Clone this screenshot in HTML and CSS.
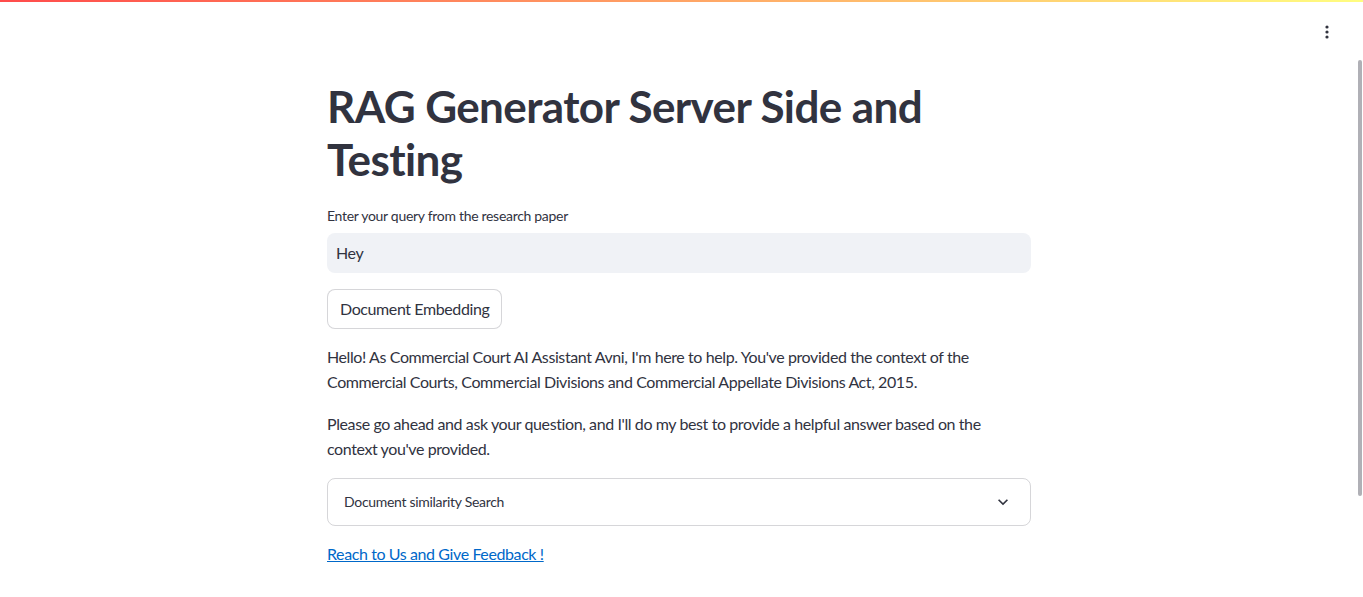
FILE: index.html
```html
<!DOCTYPE html>
<html lang="en">
<head>
<meta charset="utf-8">
<title>RAG Generator</title>
<link rel="stylesheet" href="styles.css">
</head>
<body>
<div class="app">
  <div class="decoration"></div>
  <header class="toolbar">
    <button class="menu-btn" aria-label="Main menu">
      <svg width="16" height="16" viewBox="0 0 16 16"><circle cx="8" cy="3" r="1.6" fill="#31333F"/><circle cx="8" cy="8" r="1.6" fill="#31333F"/><circle cx="8" cy="13" r="1.6" fill="#31333F"/></svg>
    </button>
  </header>
  <main class="main">
    <div class="block">
      <h1 class="title">RAG Generator Server Side and Testing</h1>
      <label class="label" for="q">Enter your query from the research paper</label>
      <div class="input-wrap"><input id="q" class="input" type="text" value="Hey"></div>
      <button class="btn">Document Embedding</button>
      <div class="md">
        <p>Hello! As Commercial Court AI Assistant Avni, I'm here to help. You've provided the context of the Commercial Courts, Commercial Divisions and Commercial Appellate Divisions Act, 2015.</p>
        <p>Please go ahead and ask your question, and I'll do my best to provide a helpful answer based on the context you've provided.</p>
      </div>
      <details class="expander">
        <summary class="summary"><span>Document similarity Search</span>
          <svg class="chev" width="20" height="20" viewBox="0 0 24 24"><path d="M7.41 8.59 12 13.17l4.59-4.58L18 10l-6 6-6-6 1.41-1.41z" fill="#31333F"/></svg>
        </summary>
      </details>
      <p class="link-p"><a class="link" href="#">Reach to Us and Give Feedback !</a></p>
    </div>
  </main>
  <div class="scroll-thumb"></div>
</div>
</body>
</html>
```

FILE: styles.css
```css
* { box-sizing: border-box; }
html, body { margin: 0; padding: 0; height: 100%; background: #fff; overflow: hidden; }
body {
  font-family: "Lato", "Source Sans Pro", sans-serif;
  color: #31333F;
  font-size: 16px;
  letter-spacing: -0.4px;
}
.app { position: relative; height: 100%; padding-right: 5px; }
.decoration {
  position: absolute; top: 0; left: 0; right: 0; height: 2px;
  background: linear-gradient(90deg, rgb(255, 75, 75), rgb(255, 253, 128));
}
.toolbar { display: flex; justify-content: flex-end; height: 60px; padding: 20px 23px 0 0; }
.menu-btn {
  border: 0; background: transparent; padding: 0; width: 16px; height: 24px;
  display: flex; align-items: center; justify-content: center; cursor: pointer;
}
.main { display: flex; justify-content: center; }
.block { width: 704px; }
.title {
  font-size: 44px; font-weight: 700; line-height: 1.2; margin: 0;
  padding: 20px 0 20px; letter-spacing: -0.6px;
}
.label { display: block; font-size: 14px; line-height: 20px; margin-bottom: 7px; letter-spacing: -0.3px; }
.input-wrap { background: #f0f2f6; border-radius: 8px; height: 40px; }
.input {
  width: 100%; height: 40px; border: 0; background: transparent; outline: none;
  font: inherit; color: #31333F; padding: 0 9px; letter-spacing: inherit;
}
.btn {
  margin-top: 16px; height: 40px; padding: 0 12px; font: inherit; letter-spacing: inherit;
  color: #31333F; background: #fff; border: 1px solid rgba(49, 51, 63, 0.2); border-radius: 8px;
}
.md { margin-top: 15px; line-height: 25.6px; }
.md p { margin: 0 0 16px; }
.expander {
  border: 1px solid rgba(49, 51, 63, 0.2); border-radius: 8px; margin-top: 2px;
}
.summary {
  list-style: none; display: flex; align-items: center; justify-content: space-between;
  height: 46px; padding: 0 17px 0 16px; font-size: 14px; letter-spacing: -0.3px;
}
.summary::-webkit-details-marker { display: none; }
.chev { display: block; }
.link-p { margin: 15px 0 0; line-height: 25.6px; }
.link { color: #0068c9; text-decoration: underline; }
.scroll-thumb {
  position: absolute; right: 1px; top: 60px; width: 4px; height: 436px;
  background: #b0b0b6; border-radius: 2px;
}
```
